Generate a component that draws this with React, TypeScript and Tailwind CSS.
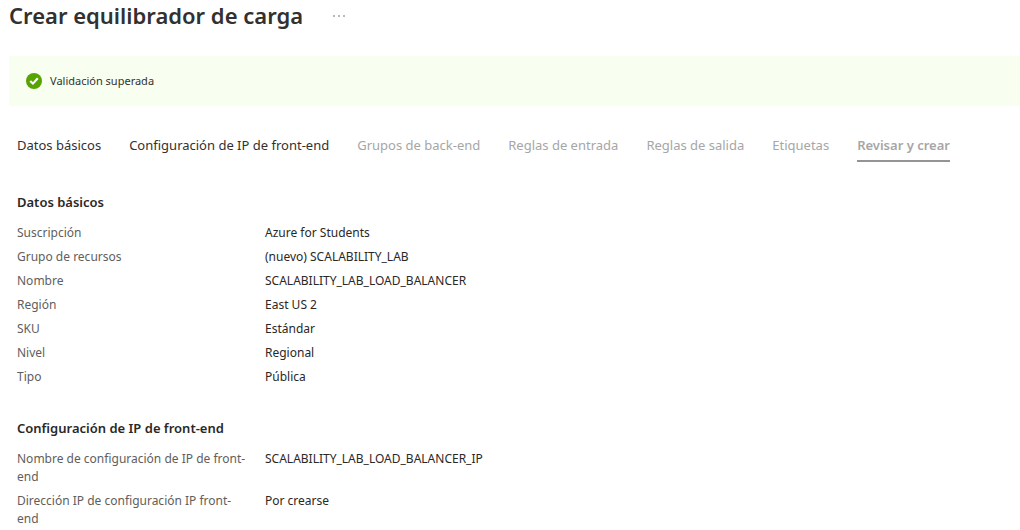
type Tab = { label: string; state: "enabled" | "disabled" | "current" };

const tabs: Tab[] = [
  { label: "Datos básicos", state: "enabled" },
  { label: "Configuración de IP de front-end", state: "enabled" },
  { label: "Grupos de back-end", state: "disabled" },
  { label: "Reglas de entrada", state: "disabled" },
  { label: "Reglas de salida", state: "disabled" },
  { label: "Etiquetas", state: "disabled" },
  { label: "Revisar y crear", state: "current" },
];

const tabStyles = {
  enabled: "border-transparent text-[#323130]",
  disabled: "border-transparent text-[#a6a6a6]",
  current: "border-[#949494] font-semibold text-[#a6a6a6]",
};

const basics: [string, string][] = [
  ["Suscripción", "Azure for Students"],
  ["Grupo de recursos", "(nuevo) SCALABILITY_LAB"],
  ["Nombre", "SCALABILITY_LAB_LOAD_BALANCER"],
  ["Región", "East US 2"],
  ["SKU", "Estándar"],
  ["Nivel", "Regional"],
  ["Tipo", "Pública"],
];

const frontend: [string, string][] = [
  ["Nombre de configuración de IP de front-end", "SCALABILITY_LAB_LOAD_BALANCER_IP"],
  ["Dirección IP de configuración IP front-end", "Por crearse"],
];

function Section({ title, rows }: { title: string; rows: [string, string][] }) {
  return (
    <section>
      <h2 className="text-[13px] leading-5 font-semibold text-[#292827]">{title}</h2>
      <dl className="mt-3 flex flex-col gap-1.5 text-[12px] leading-[18px]">
        {rows.map(([label, value]) => (
          <div key={label} className="flex gap-4">
            <dt className="w-[232px] shrink-0 text-[#605e5c]">{label}</dt>
            <dd className="min-w-0 text-[#292827]">{value}</dd>
          </div>
        ))}
      </dl>
    </section>
  );
}

export default function App() {
  return (
    <main className="bg-white pl-[9px] font-['Segoe_UI','Noto_Sans','Open_Sans',sans-serif] text-[#323130]">
      <header className="flex items-start gap-6">
        <h1 className="text-[22px] leading-[30px] font-semibold">Crear equilibrador de carga</h1>
        <button type="button" aria-label="Más opciones" className="flex h-8 w-6 items-center justify-center">
          <svg viewBox="0 0 12 2" className="h-0.5 w-3" fill="#605e5c" aria-hidden="true">
            <circle cx="1" cy="1" r="0.8" />
            <circle cx="6" cy="1" r="0.8" />
            <circle cx="11" cy="1" r="0.8" />
          </svg>
        </button>
      </header>

      <div role="status" className="mt-6 flex h-[50px] items-center gap-2 bg-[#f8fff0] pl-[17px] text-[11px]">
        <svg viewBox="0 0 16 16" className="size-4" aria-hidden="true">
          <circle cx="8" cy="8" r="8" fill="#57a300" />
          <path d="M4.2 8 6.9 10.6 11.8 5.2" fill="none" stroke="#fff" strokeWidth="2.1" />
        </svg>
        <span>Validación superada</span>
      </div>

      <div className="pl-2">
        <nav className="mt-[25px] flex gap-7 text-[13px] leading-[29px] whitespace-nowrap">
          {tabs.map(({ label, state }) => (
            <button
              key={label}
              type="button"
              disabled={state === "disabled"}
              aria-current={state === "current" ? "step" : undefined}
              className={`border-b-2 ${tabStyles[state]}`}
            >
              {label}
            </button>
          ))}
        </nav>

        <div className="mt-[30px] flex flex-col gap-8">
          <Section title="Datos básicos" rows={basics} />
          <Section title="Configuración de IP de front-end" rows={frontend} />
        </div>
      </div>
    </main>
  );
}
